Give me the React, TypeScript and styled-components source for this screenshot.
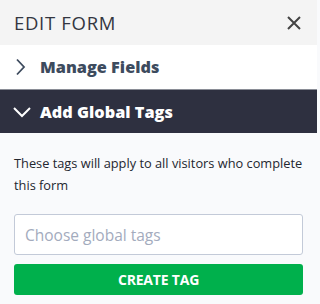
import styled, { createGlobalStyle } from 'styled-components';

const GlobalStyle = createGlobalStyle`
	html, body {
		margin: 0;
		padding: 0;
		background: #f9fafc;
	}
	* {
		box-sizing: border-box;
	}
`;

const Panel = styled.div`
	width: 317px;
	height: 304px;
	display: flex;
	flex-direction: column;
	background: #f9fafc;
	font-family: 'Open Sans', sans-serif;
	overflow: hidden;
`;

const Header = styled.div`
	height: 45px;
	display: flex;
	align-items: center;
	justify-content: space-between;
	padding: 0 16px 0 14px;
	background: #f4f4f4;
`;

const Title = styled.h1`
	margin: 0;
	font-size: 18.5px;
	font-weight: 400;
	color: #333640;
	letter-spacing: 0.7px;
`;

const CloseButton = styled.button`
	border: 0;
	background: none;
	padding: 0;
	display: flex;
	cursor: pointer;
`;

const Section = styled.div<{ open: boolean }>`
	height: 44px;
	display: flex;
	align-items: center;
	padding-left: 12px;
	background: ${(p) => (p.open ? '#2e3040' : '#ffffff')};
	color: ${(p) => (p.open ? '#ffffff' : '#3d4b5e')};
	border-top: ${(p) => (p.open ? '1px solid #8a8d96' : 'none')};
`;

const Chevron = styled.span`
	width: 28px;
	display: flex;
	align-items: center;
`;

const SectionLabel = styled.span`
	font-size: 16.3px;
	font-weight: 800;
`;

const Body = styled.div`
	padding: 19px 14px 0;
	display: flex;
	flex-direction: column;
`;

const Help = styled.p`
	margin: 0 0 18px;
	font-size: 12.8px;
	line-height: 22px;
	color: #23262f;
`;

const TagInput = styled.input`
	height: 41px;
	width: 100%;
	border: 1px solid #c3cad8;
	border-radius: 3px;
	padding: 0 10px;
	font-family: inherit;
	font-size: 15.5px;
	background: #ffffff;
	color: #333;
	outline: none;
	&::placeholder {
		color: #a3abbd;
	}
`;

const CreateButton = styled.button`
	margin-top: 9px;
	height: 31px;
	width: 100%;
	border: 0;
	border-radius: 3px;
	background: #00b04c;
	color: #ffffff;
	font-family: inherit;
	font-size: 14px;
	font-weight: 700;
	letter-spacing: -0.2px;
	cursor: pointer;
`;

const App = () => {
	return (
		<>
			<GlobalStyle />
			<Panel>
				<Header>
					<Title>EDIT FORM</Title>
					<CloseButton aria-label='Close'>
						<svg width='14' height='14' viewBox='0 0 14 14'>
							<path d='M1 1 L13 13 M13 1 L1 13' stroke='#444' strokeWidth='2' />
						</svg>
					</CloseButton>
				</Header>
				<Section open={false}>
					<Chevron>
						<svg width='14' height='18' viewBox='0 0 14 18'>
							<path d='M5 1.5 L12 9 L5 16.5' fill='none' stroke='#3d4b5e' strokeWidth='1.8' />
						</svg>
					</Chevron>
					<SectionLabel>Manage Fields</SectionLabel>
				</Section>
				<Section open>
					<Chevron>
						<svg width='22' height='12' viewBox='0 0 22 12'>
							<path d='M2 2 L10 10 L18 2' fill='none' stroke='#ffffff' strokeWidth='2' />
						</svg>
					</Chevron>
					<SectionLabel>Add Global Tags</SectionLabel>
				</Section>
				<Body>
					<Help>These tags will apply to all visitors who complete this form</Help>
					<TagInput placeholder='Choose global tags' />
					<CreateButton>CREATE TAG</CreateButton>
				</Body>
			</Panel>
		</>
	);
};

export default App;
